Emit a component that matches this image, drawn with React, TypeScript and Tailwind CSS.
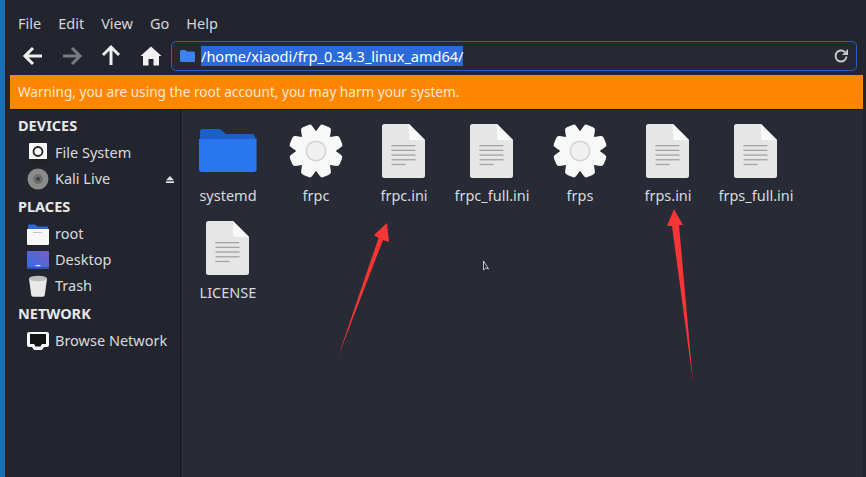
import React from "react";

const FONT = "font-['Noto_Sans','Open_Sans',sans-serif]";

const Folder = () => (
  <svg width="58" height="46" viewBox="0 0 58 46">
    <path d="M1 4a3 3 0 0 1 3-3h17l6 5h26a3 3 0 0 1 3 3v6H1z" fill="#1d5fc9" />
    <path d="M0 11h55l2.600-1v31a3 3 0 0 1-3 3H3a3 3 0 0 1-3-3z" fill="#2a76ee" />
  </svg>
);

const Gear = () => {
  const teeth = [0, 45, 90, 135, 180, 225, 270, 315];
  return (
    <svg width="56" height="56" viewBox="0 0 56 56">
      {teeth.map((a) => (
        <path
          key={a}
          d="M19.500 14L22 3.500Q22.500 1 25 1h6q2.500 0 3 2.500L36.500 14z"
          fill="#f8f8f8"
          transform={`rotate(${a + 22.5} 28 28)`}
        />
      ))}
      <circle cx="28" cy="28" r="20" fill="#f8f8f8" />
      <circle cx="28" cy="28" r="10.500" fill="#d4d4d4" />
      <circle cx="28" cy="28" r="9" fill="#f0f0f0" />
    </svg>
  );
};

const FileDoc = () => (
  <svg width="43" height="54" viewBox="0 0 43 54" className="mr-[1px]">
    <path d="M2.500 0H27l16 16v35.500a2.500 2.500 0 0 1-2.500 2.500h-38A2.500 2.500 0 0 1 0 51.500v-49A2.500 2.500 0 0 1 2.500 0z" fill="#e6e6e6" />
    <path d="M27 0l16 16H30a3 3 0 0 1-3-3z" fill="#fafafa" />
    <g fill="#a3a3a3">
      <rect x="9.500" y="21" width="24" height="1.300" />
      <rect x="9.500" y="25.700" width="24" height="1.300" />
      <rect x="9.500" y="30.400" width="24" height="1.300" />
      <rect x="9.500" y="35.100" width="24" height="1.300" />
      <rect x="9.500" y="39.800" width="14" height="1.300" />
    </g>
  </svg>
);

const files: { name: string; kind: "folder" | "gear" | "doc" }[] = [
  { name: "systemd", kind: "folder" },
  { name: "frpc", kind: "gear" },
  { name: "frpc.ini", kind: "doc" },
  { name: "frpc_full.ini", kind: "doc" },
  { name: "frps", kind: "gear" },
  { name: "frps.ini", kind: "doc" },
  { name: "frps_full.ini", kind: "doc" },
  { name: "LICENSE", kind: "doc" },
];

const SideIcon = ({ kind }: { kind: string }) => {
  if (kind === "disk")
    return (
      <svg width="20" height="22" viewBox="0 0 20 22">
        <rect x="1" y="1" width="18" height="20" rx="1" fill="#fafafa" />
        <rect x="1" y="17" width="18" height="4" fill="#222" />
        <circle cx="10" cy="9.500" r="4.500" fill="none" stroke="#222" strokeWidth="1.800" />
      </svg>
    );
  if (kind === "cd")
    return (
      <svg width="22" height="22" viewBox="0 0 22 22">
        <circle cx="11" cy="11" r="10.500" fill="#8b8b8b" />
        <circle cx="11" cy="11" r="5" fill="#6f6f6f" />
        <circle cx="11" cy="11" r="2" fill="#3f3f3f" />
      </svg>
    );
  if (kind === "home")
    return (
      <svg width="22" height="21" viewBox="0 0 22 21">
        <path d="M1 1.500a1 1 0 0 1 1-1h6l2 2h11v4H1z" fill="#2a6bdc" />
        <path d="M0 5h22v15a1 1 0 0 1-1 1H1a1 1 0 0 1-1-1z" fill="#f7f7f7" />
        <rect x="6" y="8" width="9" height="1" fill="#c4c4c4" />
      </svg>
    );
  if (kind === "desktop")
    return (
      <svg width="22" height="18" viewBox="0 0 22 18">
        <defs>
          <linearGradient id="desk" x1="0" y1="1" x2="1" y2="0">
            <stop offset="0" stopColor="#2f6fe6" />
            <stop offset="1" stopColor="#7a5cc4" />
          </linearGradient>
        </defs>
        <rect width="22" height="18" rx="1" fill="url(#desk)" />
        <rect y="16" width="22" height="2" fill="#3154a8" />
        <rect x="8.500" y="14" width="5" height="1.200" fill="#dfe6f5" />
      </svg>
    );
  if (kind === "trash")
    return (
      <svg width="20" height="22" viewBox="0 0 20 22">
        <path d="M1 3.500h18l-2.200 16.500a2 2 0 0 1-2 1.700H5.200a2 2 0 0 1-2-1.700z" fill="#e9e9e9" />
        <ellipse cx="10" cy="3.500" rx="9" ry="2.800" fill="#bdbdbd" />
      </svg>
    );
  return (
    <svg width="22" height="18" viewBox="0 0 22 18">
      <path d="M2 0h18a2 2 0 0 1 2 2v11a2 2 0 0 1-2 2h-3l-2 3H7l-2-3H2a2 2 0 0 1-2-2V2a2 2 0 0 1 2-2z" fill="#f7f7f7" />
      <path d="M3 2h16v10h-4l-1.500 2.500h-5L7 12H3z" fill="#141414" />
    </svg>
  );
};

const Section = ({ title, children }: { title: string; children: React.ReactNode }) => (
  <div className="flex flex-col">
    <div className="h-[29px] leading-[29px] pl-[8px] font-bold text-[14.500px] text-[#e8e8ea]">{title}</div>
    {children}
  </div>
);

const Row = ({ icon, label, eject }: { icon: string; label: string; eject?: boolean }) => (
  <div className="h-[26px] flex items-center pl-[17px] pr-[6px] text-[14.500px] text-[#d9dade]">
    <span className="w-[22px] h-[26px] flex items-center justify-center shrink-0">
      <SideIcon kind={icon} />
    </span>
    <span className="ml-[6px] flex-1 whitespace-nowrap">{label}</span>
    {eject && (
      <svg width="8" height="7" viewBox="0 0 8 7">
        <path d="M4 0l4 4.200H0z" fill="#e0e0e0" />
        <rect y="5.300" width="8" height="1.700" fill="#e0e0e0" />
      </svg>
    )}
  </div>
);

export default function App() {
  return (
    <div className={`${FONT} relative w-[866px] h-[477px] overflow-hidden flex bg-[#23252e]`}>
      <div className="w-[5px] bg-[#1b6fb5] shrink-0" />
      <div className="flex-1 flex flex-col min-w-0 pl-[5px] pr-[3px]">
        <div className="h-[12px]" />
        <div className="h-[23px] flex items-center gap-[17px] pl-[8px] text-[14.500px] text-[#d6d7db]">
          <span>File</span>
          <span>Edit</span>
          <span>View</span>
          <span>Go</span>
          <span>Help</span>
        </div>
        <div className="h-[40px] flex items-center pt-[1px]">
          <div className="w-[161px] flex items-center shrink-0">
            <svg width="160" height="24" viewBox="0 0 160 24" className="shrink-0">
              <path d="M15 12H33M24 4l-8 8 8 8" transform="translate(-1 0)" fill="none" stroke="#f0f0f0" strokeWidth="3" />
              <path d="M53 12H71M62 4l8 8-8 8" fill="none" stroke="#7b7c80" strokeWidth="3" />
              <path d="M101 21V4M93 11l8-8 8 8" fill="none" stroke="#f0f0f0" strokeWidth="3" />
              <path d="M141 2.500l10.500 9.500H149v9.500h-5.500V15h-5v6.500H133V12h-2.500z" fill="#f2f2f2" />
            </svg>
          </div>
          <div className="w-[686px] h-[30px] rounded-[5px] border-[1.500px] border-[#2560c8] bg-[#262932] flex items-center pl-[8px] pr-[7px]">
            <svg width="15" height="12" viewBox="0 0 15 12" className="shrink-0">
              <path d="M0 1.500A1.500 1.500 0 0 1 1.500 0h4l1.500 1.500h6.500A1.500 1.500 0 0 1 15 3v7.500a1.500 1.500 0 0 1-1.500 1.500h-12A1.500 1.500 0 0 1 0 10.500z" fill="#3d82ea" />
            </svg>
            <span className="ml-[6px] h-[20px] leading-[20px] text-[14.500px] text-white bg-[#2b6ad8] whitespace-nowrap">/home/xiaodi/frp_0.34.3_linux_amd64/</span>
            <span className="flex-1" />
            <svg width="16" height="16" viewBox="0 0 16 16">
              <path d="M13.500 8.500a5.500 5.500 0 1 1-1.800-4.600" fill="none" stroke="#c9c9cc" strokeWidth="2" />
              <path d="M15 1v6H9z" fill="#c9c9cc" />
            </svg>
          </div>
        </div>
        <div className="h-[35px] shrink-0 bg-[#ff8600] border-b border-[#1c1208] flex items-center pl-[8px] pt-[1px] text-[13.600px] text-[#ffe9cf]">
          Warning, you are using the root account, you may harm your system.
        </div>
        <div className="flex-1 flex min-h-0">
          <div className="w-[170px] shrink-0 pt-[1px]">
            <Section title="DEVICES">
              <Row icon="disk" label="File System" />
              <Row icon="cd" label="Kali Live" eject />
            </Section>
            <Section title="PLACES">
              <Row icon="home" label="root" />
              <Row icon="desktop" label="Desktop" />
              <Row icon="trash" label="Trash" />
            </Section>
            <Section title="NETWORK">
              <Row icon="network" label="Browse Network" />
            </Section>
          </div>
          <div className="flex-1 bg-[#282b35] border-l border-[#14151a] pl-[3px] pt-[12px]">
            <div className="grid grid-cols-[repeat(7,88px)] auto-rows-[97px]">
              {files.map((f) => (
                <div key={f.name} className="flex flex-col items-center">
                  <div className="h-[58px] flex items-center justify-center">
                    {f.kind === "folder" && <Folder />}
                    {f.kind === "gear" && <Gear />}
                    {f.kind === "doc" && <FileDoc />}
                  </div>
                  <div className="mt-[5px] text-[14.500px] leading-[20px] text-[#d9dade] whitespace-nowrap">{f.name}</div>
                </div>
              ))}
            </div>
          </div>
        </div>
      </div>
      {/* red annotation arrows + mouse pointer, drawn over the window */}
      <svg className="absolute inset-0 pointer-events-none" width="866" height="477" viewBox="0 0 866 477">
        <path d="M387 223L374 235L378.500 238L338 357L383 240L389 242z" fill="#f93535" />
        <path d="M674 209L667 226L672 226L693 382L679 225L683 225z" fill="#f93535" />
        <path d="M483.500 261v9l2.200-2 2.800 1z" fill="#23252e" stroke="#e8e8e8" strokeWidth="0.800" />
      </svg>
    </div>
  );
}
